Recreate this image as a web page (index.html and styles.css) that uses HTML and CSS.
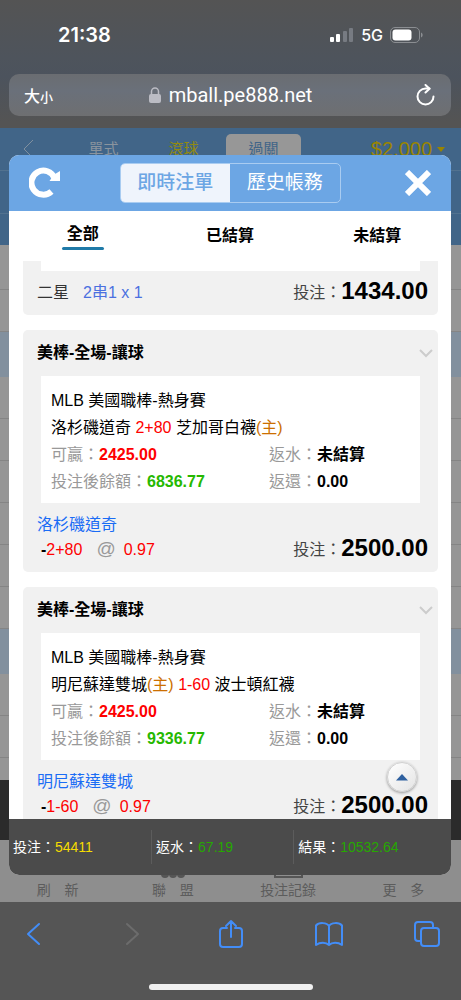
FILE: index.html
```html
<!DOCTYPE html>
<html lang="zh-Hant">
<head>
    <meta charset="UTF-8">
    <meta name="viewport" content="width=device-width, initial-scale=1.0">
    <link rel="stylesheet" href="styles.css">
    <title>即時注單</title>
</head>
<body>
    <header class="browser">
        <div class="status">
            <span class="time">21:38</span>
            <div class="signal">
                <svg width="24" height="16" viewBox="0 0 24 16">
                    <rect x="0" y="10" width="4" height="5" rx="1" fill="#fff"/>
                    <rect x="6" y="7" width="4" height="8" rx="1" fill="#fff"/>
                    <rect x="13" y="4" width="4" height="11" rx="1" fill="#777b82"/>
                    <rect x="19" y="1" width="4" height="14" rx="1" fill="#777b82"/>
                </svg>
                <span class="net">5G</span>
                <svg width="33" height="16" viewBox="0 0 33 16">
                    <rect x="0.5" y="0.5" width="29" height="15" rx="4.5" fill="none" stroke="#8b8e92"/>
                    <rect x="2.5" y="2.5" width="19" height="11" rx="3" fill="#fff"/>
                    <path d="M31 5.5c2.200 0.800 2.200 4.200 0 5z" fill="#8b8e92"/>
                </svg>
            </div>
        </div>
        <div class="address">
            <button class="size">大<small>小</small></button>
            <div class="url">
                <svg width="12" height="17" viewBox="0 0 12 17">
                    <rect x="0" y="7" width="12" height="9" rx="2" fill="#bbbcc4"/>
                    <path d="M2.500 8V4.500a3.500 3.500 0 0 1 7 0V8" fill="none" stroke="#bbbcc4" stroke-width="1.500"/>
                </svg>
                <span>mball.pe888.net</span>
            </div>
            <button class="reload" aria-label="重新載入">
                <svg width="20" height="22" viewBox="0 0 20 22" fill="none" stroke="#fff" stroke-width="2" stroke-linecap="round" stroke-linejoin="round">
                    <path d="M17.500 12.500A8 8 0 1 1 9.500 4.500h4"/>
                    <path d="M9.500 1l4 3.700-4 3.800"/>
                </svg>
            </button>
        </div>
    </header>

    <main class="page">
        <nav class="menu">
            <svg class="back" width="12" height="20" viewBox="0 0 12 20" fill="none" stroke="#80909f" stroke-width="1">
                <path d="M10 1L1 10l9 9"/>
            </svg>
            <div class="modes">
                <a href="#">單式</a>
                <a href="#" class="live">滾球</a>
                <a href="#" class="on">過關</a>
            </div>
            <span class="money">$2,000<i></i></span>
        </nav>
        <div class="sub"></div>
        <div class="sub last"></div>
        <div class="rows">
            <div class="row"></div>
            <div class="row"></div>
            <div class="row league"></div>
            <div class="row"></div>
            <div class="row"></div>
            <div class="row"></div>
            <div class="row"></div>
            <div class="row"></div>
            <div class="row"></div>
            <div class="row league"></div>
            <div class="row"></div>
            <div class="row"></div>
            <div class="row"></div>
        </div>
        <div class="dark"></div>
        <div class="bottom">
            <a href="#">刷　新</a>
            <a href="#">
                <svg width="24" height="24" viewBox="0 0 24 24" fill="#555">
                    <circle cx="4" cy="20" r="4"/><circle cx="12" cy="20" r="4"/><circle cx="20" cy="20" r="4"/>
                </svg>
                聯　盟
            </a>
            <a href="#">
                <svg width="29" height="24" viewBox="0 0 29 24" fill="none" stroke="#555" stroke-width="2">
                    <rect x="1" y="1" width="27" height="22"/>
                </svg>
                投注記錄
            </a>
            <a href="#">更　多</a>
        </div>

        <section class="modal">
            <div class="modal-head">
                <button aria-label="刷新">
                    <svg width="32" height="32" viewBox="0 0 32 32">
                        <path d="M22.500 24.500A12 12 0 1 1 25.500 11" fill="none" stroke="#fff" stroke-width="6"/>
                        <path d="M31 4v10H20.500l4-6z" fill="#fff"/>
                    </svg>
                </button>
                <div class="switch">
                    <button class="on">即時注單</button>
                    <button>歷史帳務</button>
                </div>
                <button class="close" aria-label="關閉">
                    <svg width="26" height="26" viewBox="0 0 26 26" stroke="#fff" stroke-width="6">
                        <path d="M2 2l22 22M24 2L2 24"/>
                    </svg>
                </button>
            </div>

            <div class="tabs">
                <button class="on">全部</button>
                <button>已結算</button>
                <button>未結算</button>
            </div>

            <div class="list">
                <article class="card">
                    <div class="match cut"></div>
                    <div class="foot single">
                        <div class="combo">二星<span>2串1 x 1</span></div>
                        <div class="bet">投注：<b>1434.00</b></div>
                    </div>
                </article>

                <article class="card">
                    <h2>美棒-全場-讓球
                        <svg width="14" height="9" viewBox="0 0 14 9" fill="none" stroke="#ccc" stroke-width="2"><path d="M1 1l6 6 6-6"/></svg>
                    </h2>
                    <div class="match">
                        <p>MLB 美國職棒-熱身賽</p>
                        <p>洛杉磯道奇 <em>2+80</em> 芝加哥白襪<i>(主)</i></p>
                        <div class="info">
                            <p>可贏：<b class="red">2425.00</b></p>
                            <p>返水：<b>未結算</b></p>
                            <p>投注後餘額：<b class="green">6836.77</b></p>
                            <p>返還：<b>0.00</b></p>
                        </div>
                    </div>
                    <div class="foot">
                        <div>
                            <div class="team">洛杉磯道奇</div>
                            <div class="odds"><b>-</b>2+80<span>@</span>0.97</div>
                        </div>
                        <div class="bet">投注：<b>2500.00</b></div>
                    </div>
                </article>

                <article class="card">
                    <h2>美棒-全場-讓球
                        <svg width="14" height="9" viewBox="0 0 14 9" fill="none" stroke="#ccc" stroke-width="2"><path d="M1 1l6 6 6-6"/></svg>
                    </h2>
                    <div class="match">
                        <p>MLB 美國職棒-熱身賽</p>
                        <p>明尼蘇達雙城<i>(主)</i> <em>1-60</em> 波士頓紅襪</p>
                        <div class="info">
                            <p>可贏：<b class="red">2425.00</b></p>
                            <p>返水：<b>未結算</b></p>
                            <p>投注後餘額：<b class="green">9336.77</b></p>
                            <p>返還：<b>0.00</b></p>
                        </div>
                    </div>
                    <div class="foot">
                        <div>
                            <div class="team">明尼蘇達雙城</div>
                            <div class="odds"><b>-</b>1-60<span>@</span>0.97</div>
                        </div>
                        <div class="bet">投注：<b>2500.00</b></div>
                    </div>
                </article>
            </div>

            <div class="total">
                <div>投注：<span class="yellow">54411</span></div>
                <div>返水：<span>67.19</span></div>
                <div>結果：<span>10532.64</span></div>
            </div>

            <button class="top" aria-label="回頂部">
                <svg width="12" height="7" viewBox="0 0 12 7"><path d="M6 0l6 6.500H0z" fill="#2f609f"/></svg>
            </button>
        </section>
    </main>

    <footer class="toolbar">
        <div class="tools">
            <button aria-label="上一頁">
                <svg width="28" height="30" viewBox="0 0 28 30"><path d="M19 5L8 15l11 10"/></svg>
            </button>
            <button aria-label="下一頁" class="off">
                <svg width="28" height="30" viewBox="0 0 28 30"><path d="M9 5l11 10L9 25"/></svg>
            </button>
            <button aria-label="分享">
                <svg width="28" height="30" viewBox="0 0 28 30"><path d="M10 9H6a3 3 0 0 0-3 3v13a3 3 0 0 0 3 3h16a3 3 0 0 0 3-3V12a3 3 0 0 0-3-3h-4M14 18V2M9 7l5-5 5 5"/></svg>
            </button>
            <button aria-label="書籤">
                <svg width="28" height="30" viewBox="0 0 28 30"><path d="M14 7v19M14 7C12 3.500 4 3 1 6.500V26c4-3 10-3 13 0 3-3 9-3 13 0V6.500C24 3 16 3.500 14 7z"/></svg>
            </button>
            <button aria-label="分頁">
                <svg width="28" height="30" viewBox="0 0 28 30"><path d="M7 22H5a3 3 0 0 1-3-3V6a3 3 0 0 1 3-3h12a3 3 0 0 1 3 3v3"/><rect x="8" y="9" width="18" height="18" rx="3"/></svg>
            </button>
        </div>
        <div class="home"></div>
    </footer>
</body>
</html>
```

FILE: styles.css
```css
*{
    margin: 0;
    padding: 0;
    box-sizing: border-box;
}
body{
    height: 100vh;
    display: flex;
    flex-direction: column;
    background: #545454;
    font-family: "Liberation Sans", "Noto Sans CJK TC", sans-serif;
    font-size: 16px;
    color: #000;
}
button{
    border: none;
    background: none;
    font: inherit;
    color: inherit;
    cursor: pointer;
}
a{
    color: inherit;
    text-decoration: none;
}
svg{
    display: block;
}
i, em{
    font-style: normal;
}

/* browser bar */
.browser{
    padding: 0 10px 12px 9px;
    background: linear-gradient(#545454, #4e545c 45%, #4c535d 60%, #545454 95%);
    color: #fff;
    font-family: Inter, "Noto Sans CJK TC", sans-serif;
}
.status{
    height: 74px;
    padding: 0 28px 4px 49px;
    display: flex;
    justify-content: space-between;
    align-items: center;
}
.time{
    font-size: 20px;
    font-weight: 600;
}
.signal{
    display: flex;
    align-items: center;
    gap: 7px;
}
.net{
    font-size: 16px;
    font-weight: 500;
}
.address{
    height: 42px;
    padding: 0 15px;
    display: flex;
    justify-content: space-between;
    align-items: center;
    border-radius: 10px;
    background: linear-gradient(#6a6d71, #6a707a 40%, #6e6f71);
}
.size{
    font-weight: 500;
}
.size small{
    font-size: 13px;
}
.url{
    display: flex;
    align-items: center;
    gap: 8px;
    margin-right: 8px;
    font-family: Roboto, sans-serif;
    font-size: 20px;
}

/* page under the modal */
.page{
    flex: 1;
    min-height: 0;
    position: relative;
    display: flex;
    flex-direction: column;
    background: #969696;
}
.menu{
    height: 43px;
    padding: 0 16px 0 23px;
    display: flex;
    align-items: center;
    background: #416588;
    border-bottom: 1px solid #52728f;
}
.modes{
    display: flex;
    gap: 5px;
    margin-left: 31px;
    color: #8a949e;
    font-size: 15px;
    line-height: 30px;
    text-align: center;
}
.modes a{
    width: 75px;
    border-radius: 5px;
}
.modes .live{
    color: #918a10;
}
.modes .on{
    background: #979797;
    color: #416588;
}
.money{
    display: flex;
    align-items: center;
    gap: 5px;
    margin-left: auto;
    color: #998400;
    font-size: 20px;
}
.money i{
    border: 4px solid transparent;
    border-top: 5px solid #998400;
    border-bottom: none;
}
.sub{
    height: 43px;
    background: #416588;
    border-bottom: 1px solid #52728f;
}
.last{
    height: 31px;
    border: none;
}
.rows{
    flex: 1;
    min-height: 0;
    padding-top: 3px;
    overflow: hidden;
}
.row{
    height: 42px;
    border-bottom: 1px solid #858585;
}
.row.league{
    height: 45px;
    background: #82909e;
    border: none;
}
.dark{
    height: 60px;
    background: #2b2b2b;
}
.bottom{
    height: 62px;
    display: flex;
    background: #8e8e8e;
    color: #5c5c5c;
    font-size: 14px;
    line-height: 24px;
}
.bottom a{
    flex: 1;
    display: flex;
    flex-direction: column;
    justify-content: flex-end;
    align-items: center;
}

/* modal */
.modal{
    position: absolute;
    top: 27px;
    bottom: 27px;
    left: 9px;
    right: 10px;
    display: flex;
    flex-direction: column;
    overflow: hidden;
    border-radius: 10px;
    background: #fff;
}
.modal-head{
    height: 56px;
    flex-shrink: 0;
    padding: 0 20px;
    display: grid;
    grid-template-columns: 1fr auto 1fr;
    justify-items: start;
    align-items: center;
    background: #6ca6e4;
}
.close{
    justify-self: end;
}
.switch{
    display: flex;
    width: 221px;
    height: 40px;
    border: 1px solid #a9ccf1;
    border-radius: 5px;
    overflow: hidden;
}
.switch button{
    flex: 1;
    color: #fff;
    font-size: 19px;
    line-height: 38px;
}
.switch .on{
    background: #eff4fc;
    color: #6ca6e4;
    font-weight: 500;
}
.tabs{
    height: 50px;
    flex-shrink: 0;
    display: flex;
}
.tabs button{
    flex: 1;
    display: flex;
    flex-direction: column;
    align-items: center;
    padding-top: 13px;
    line-height: 24px;
    font-weight: bold;
}
.tabs .on{
    padding-top: 11px;
}
.tabs .on::after{
    content: "";
    width: 42px;
    height: 3px;
    margin-top: 1px;
    border-radius: 2px;
    background: #1f7aa8;
}
.list{
    flex: 1;
    min-height: 0;
    overflow: hidden;
    padding: 0 13px 0 14px;
}
.card{
    margin-bottom: 15px;
    padding: 0 18px;
    border-radius: 5px;
    background: #f1f1f1;
}
.card:first-child{
    border-radius: 0 0 5px 5px;
}
.card h2{
    display: flex;
    justify-content: space-between;
    align-items: center;
    margin: 0 -13px 0 -4px;
    font-size: 16px;
    line-height: 46px;
}
.match{
    padding: 11px 10px 8px;
    background: #fff;
    line-height: 27px;
}
.match em, .red{
    color: #fe0000;
}
.match i{
    color: #cc6f00;
}
.cut{
    height: 10px;
    padding: 0;
}
.info{
    display: grid;
    grid-template-columns: 218px 1fr;
    color: #999;
}
.info b{
    color: #000;
}
.info .red{
    color: #fe0000;
}
.info .green{
    color: #26b800;
}
.foot{
    display: flex;
    justify-content: space-between;
    align-items: flex-end;
    margin: 0 -8px 0 -4px;
    padding: 9px 0 10px;
    line-height: 25px;
}
.single{
    height: 44px;
    padding: 0 0 10px;
    color: #333;
}
.combo span{
    margin-left: 14px;
    color: #4b70e0;
}
.team{
    color: #1a6cf5;
}
.odds{
    padding-left: 4px;
    color: #fe0000;
}
.odds b{
    color: #000;
}
.odds span{
    margin: 0 8px 0 14px;
    color: #999;
    font-size: 19px;
    line-height: 20px;
}
.bet{
    display: flex;
    align-items: center;
    color: #444;
}
.bet b{
    color: #000;
    font-size: 24px;
    line-height: 21px;
    padding-bottom: 4px;
}
.total{
    height: 56px;
    flex-shrink: 0;
    display: grid;
    grid-template-columns: 9fr 9fr 10fr;
    align-items: center;
    background: #4b4b4b;
    color: #fff;
    font-size: 14px;
    line-height: 34px;
}
.total div{
    padding-left: 4px;
}
.total div + div{
    border-left: 1px solid #5c5c5c;
}
.total span{
    color: #26a800;
}
.total .yellow{
    color: #f5dc00;
}
.top{
    position: absolute;
    right: 34px;
    bottom: 83px;
    width: 30px;
    height: 30px;
    display: flex;
    justify-content: center;
    align-items: center;
    border: 1px solid #d0d0d0;
    border-radius: 50%;
    background: linear-gradient(135deg, #fff, #e4e4e4);
    box-shadow: 0 1px 3px rgba(0,0,0,0.4);
}

/* browser toolbar */
.toolbar{
    height: 98px;
    padding: 17px 20px 10px;
    display: flex;
    flex-direction: column;
    justify-content: space-between;
    align-items: center;
    background: #555;
}
.tools{
    width: 100%;
    display: flex;
    justify-content: space-between;
}
.tools svg{
    fill: none;
    stroke: #438df7;
    stroke-width: 2;
    stroke-linecap: round;
    stroke-linejoin: round;
}
.tools .off svg{
    stroke: #6c6c6c;
}
.home{
    width: 164px;
    height: 6px;
    border-radius: 3px;
    background: #f0f0f0;
}
```
